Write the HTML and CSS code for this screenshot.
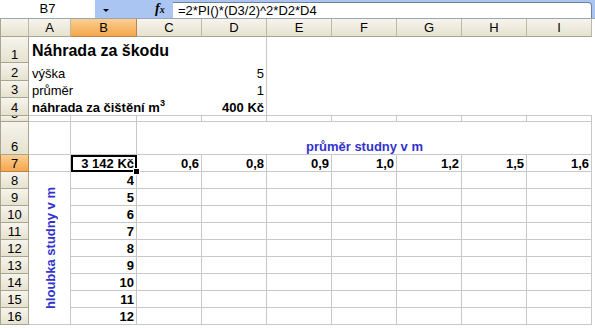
FILE: index.html
```html
<!DOCTYPE html>
<html>
  <head>
    <meta charset="utf-8">
    <title>Náhrada za škodu</title>
    <link rel="stylesheet" href="styles.css">
  </head>
  <body>
    <div class="bar">
      <div class="name-box">B7</div>
      <div class="tools">
        <span class="arrow"></span>
        <span class="fx">f<small>x</small></span>
      </div>
      <div class="formula">=2*PI()*(D3/2)^2*D2*D4</div>
    </div>
    <div class="sheet">
      <!-- column headers -->
      <div class="corner"></div>
      <div class="ch">A</div>
      <div class="ch on">B</div>
      <div class="ch">C</div>
      <div class="ch">D</div>
      <div class="ch">E</div>
      <div class="ch">F</div>
      <div class="ch">G</div>
      <div class="ch">H</div>
      <div class="ch">I</div>

      <!-- 1-4 -->
      <div class="rh">1</div>
      <div class="cell span3 title">Náhrada za škodu</div>
      <div class="cell br"></div>
      <div class="cell span5"></div>

      <div class="rh">2</div>
      <div class="cell span3">výška</div>
      <div class="cell br right">5</div>
      <div class="cell span5"></div>

      <div class="rh">3</div>
      <div class="cell span3">průměr</div>
      <div class="cell br right">1</div>
      <div class="cell span5"></div>

      <div class="rh">4</div>
      <div class="cell span3 bb bold"><span>náhrada za čištění m<sup>3</sup></span></div>
      <div class="cell br bb right bold">400 Kč</div>
      <div class="cell span5 bb"></div>

      <!-- 5 -->
      <div class="rh">5</div>
      <div class="cell br bb"></div>
      <div class="cell br bb"></div>
      <div class="cell br bb"></div>
      <div class="cell br bb"></div>
      <div class="cell br bb"></div>
      <div class="cell br bb"></div>
      <div class="cell br bb"></div>
      <div class="cell br bb"></div>
      <div class="cell br bb"></div>

      <!-- 6 -->
      <div class="rh">6</div>
      <div class="cell br bb"></div>
      <div class="cell br bb"></div>
      <div class="cell span7 br bb center blue">průměr studny v m</div>

      <!-- 7 -->
      <div class="rh on">7</div>
      <div class="cell br bb"></div>
      <div class="cell br bb right bold sel">3 142 Kč</div>
      <div class="cell br bb right bold">0,6</div>
      <div class="cell br bb right bold">0,8</div>
      <div class="cell br bb right bold">0,9</div>
      <div class="cell br bb right bold">1,0</div>
      <div class="cell br bb right bold">1,2</div>
      <div class="cell br bb right bold">1,5</div>
      <div class="cell br bb right bold">1,6</div>

      <!-- 8-16 -->
      <div class="rh">8</div>
      <div class="cell br bb depth"><span class="vert blue">hloubka studny v m</span></div>
      <div class="cell br bb right bold">4</div>
      <div class="cell br bb"></div><div class="cell br bb"></div><div class="cell br bb"></div><div class="cell br bb"></div>
      <div class="cell br bb"></div><div class="cell br bb"></div><div class="cell br bb"></div>

      <div class="rh">9</div>
      <div class="cell br bb right bold">5</div>
      <div class="cell br bb"></div><div class="cell br bb"></div><div class="cell br bb"></div><div class="cell br bb"></div>
      <div class="cell br bb"></div><div class="cell br bb"></div><div class="cell br bb"></div>

      <div class="rh">10</div>
      <div class="cell br bb right bold">6</div>
      <div class="cell br bb"></div><div class="cell br bb"></div><div class="cell br bb"></div><div class="cell br bb"></div>
      <div class="cell br bb"></div><div class="cell br bb"></div><div class="cell br bb"></div>

      <div class="rh">11</div>
      <div class="cell br bb right bold">7</div>
      <div class="cell br bb"></div><div class="cell br bb"></div><div class="cell br bb"></div><div class="cell br bb"></div>
      <div class="cell br bb"></div><div class="cell br bb"></div><div class="cell br bb"></div>

      <div class="rh">12</div>
      <div class="cell br bb right bold">8</div>
      <div class="cell br bb"></div><div class="cell br bb"></div><div class="cell br bb"></div><div class="cell br bb"></div>
      <div class="cell br bb"></div><div class="cell br bb"></div><div class="cell br bb"></div>

      <div class="rh">13</div>
      <div class="cell br bb right bold">9</div>
      <div class="cell br bb"></div><div class="cell br bb"></div><div class="cell br bb"></div><div class="cell br bb"></div>
      <div class="cell br bb"></div><div class="cell br bb"></div><div class="cell br bb"></div>

      <div class="rh">14</div>
      <div class="cell br bb right bold">10</div>
      <div class="cell br bb"></div><div class="cell br bb"></div><div class="cell br bb"></div><div class="cell br bb"></div>
      <div class="cell br bb"></div><div class="cell br bb"></div><div class="cell br bb"></div>

      <div class="rh">15</div>
      <div class="cell br bb right bold">11</div>
      <div class="cell br bb"></div><div class="cell br bb"></div><div class="cell br bb"></div><div class="cell br bb"></div>
      <div class="cell br bb"></div><div class="cell br bb"></div><div class="cell br bb"></div>

      <div class="rh">16</div>
      <div class="cell br bb right bold">12</div>
      <div class="cell br bb"></div><div class="cell br bb"></div><div class="cell br bb"></div><div class="cell br bb"></div>
      <div class="cell br bb"></div><div class="cell br bb"></div><div class="cell br bb"></div>
    </div>
  </body>
</html>
```

FILE: styles.css
```css
body {
  margin: 0;
  background: white;
  font-family: "Liberation Sans", Arial, sans-serif;
  font-size: 13px;
  color: black;
}

/* formula bar */

.bar {
  display: flex;
  height: 18px;
  background: #abc5f2;
  border-bottom: 1px solid #9aa6b8;
}

.name-box {
  width: 95px;
  background: white;
  text-align: center;
  line-height: 18px;
}

.tools {
  position: relative;
  width: 78px;
}

.arrow {
  position: absolute;
  left: 8px;
  top: 9px;
  border-left: 3px solid transparent;
  border-right: 3px solid transparent;
  border-top: 3px solid black;
}

.fx {
  position: absolute;
  left: 60px;
  top: 1px;
  font-family: "Liberation Serif", serif;
  font-style: italic;
  font-weight: bold;
  font-size: 14px;
}

.fx small {
  font-size: 10px;
}

.formula {
  flex: 1;
  margin: 2px 3px 0 0;
  padding-left: 5px;
  background: white;
  border-top: 1px solid #6f7f98;
  border-right: 1px solid #6f7f98;
  border-top-right-radius: 4px;
  line-height: 15px;
}

/* sheet grid */

.sheet {
  display: grid;
  grid-template-columns: 29px 42px 66px repeat(7, 65px);
  grid-template-rows: 18px 26px 18px 17px 18px 6px 33px 17px repeat(9, 17px);
}

.sheet > div {
  box-sizing: border-box;
}

.corner,
.ch,
.rh {
  background: linear-gradient(#f6f4ec, #e6e2d0);
  border-right: 1px solid #bdb9a6;
  border-bottom: 1px solid #a9a593;
  overflow: hidden;
}

.corner {
  border-left: 1px solid #a9a593;
}

.ch {
  text-align: center;
  line-height: 17px;
}

.rh {
  display: flex;
  align-items: flex-end;
  justify-content: center;
  line-height: 14px;
  border-left: 1px solid #a9a593;
  border-right-color: #a9a593;
}

.ch.on,
.rh.on {
  background: linear-gradient(#fbcf92, #f4a64c);
  border-color: #b9864a;
}

.cell {
  display: flex;
  align-items: flex-end;
  padding: 0 2px 0 3px;
  line-height: 15px;
  white-space: nowrap;
  overflow: hidden;
}

.br {
  border-right: 1px solid #c8c8c8;
}

.bb {
  border-bottom: 1px solid #c8c8c8;
}

.span3 {
  grid-column: span 3;
}

.span5 {
  grid-column: span 5;
}

.span7 {
  grid-column: span 7;
}

.right {
  justify-content: flex-end;
}

.center {
  justify-content: center;
}

.bold {
  font-weight: bold;
}

.title {
  font-weight: bold;
  font-size: 16px;
  line-height: 20px;
  padding-bottom: 2px;
}

sup {
  font-size: 9px;
  line-height: 0;
  vertical-align: 6px;
}

.blue {
  color: #3333cc;
  font-weight: bold;
}

.depth {
  grid-row: span 9;
  align-items: center;
  justify-content: center;
}

.vert {
  writing-mode: vertical-rl;
  transform: rotate(180deg);
  line-height: 15px;
}

/* active cell */

.sel {
  position: relative;
  overflow: visible;
}

.sel::after {
  content: "";
  position: absolute;
  top: 0;
  left: 0;
  right: -1px;
  bottom: -1px;
  border: 2px solid black;
}

.sel::before {
  content: "";
  position: absolute;
  right: -3px;
  bottom: -3px;
  width: 5px;
  height: 5px;
  background: black;
  outline: 1px solid white;
  z-index: 1;
}
```
